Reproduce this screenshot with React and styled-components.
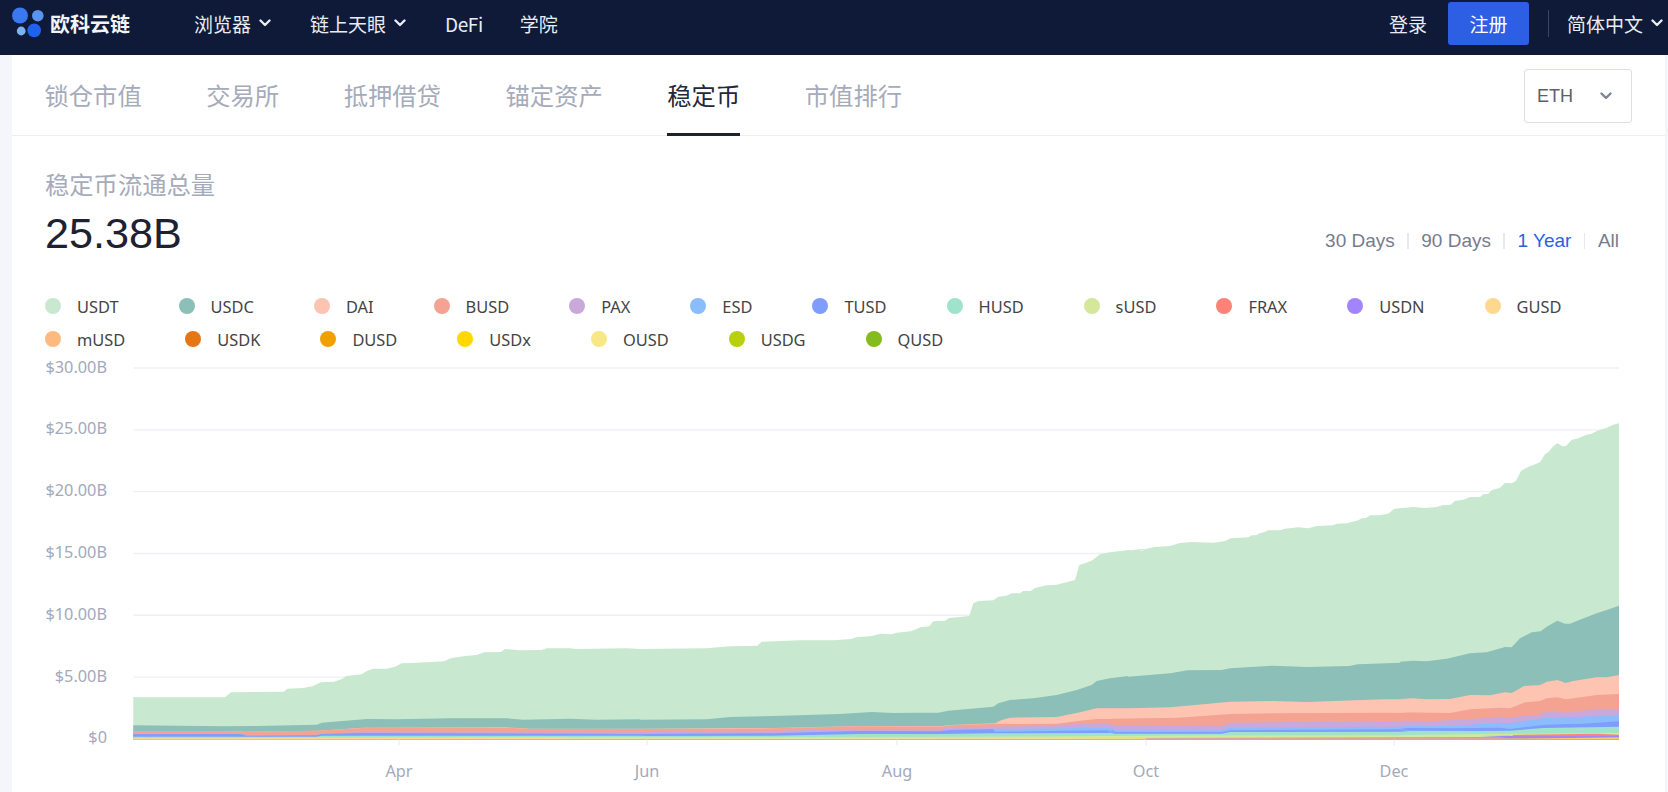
import React from "react";
import styled, { createGlobalStyle } from "styled-components";

const CJK = `"Noto Sans CJK SC", "Noto Sans", sans-serif`;
const LATIN = `"Liberation Sans", "Noto Sans CJK SC", sans-serif`;
const UI = `"Noto Sans", "Noto Sans CJK SC", sans-serif`;

const Global = createGlobalStyle`
  html, body { margin: 0; padding: 0; height: 792px; overflow: hidden; background: #f4f6fb; }
  #root { height: 792px; }
  * { box-sizing: border-box; }
`;

const Header = styled.header`
  display: flex;
  align-items: center;
  height: 55px;
  padding: 0 5px 9px 12px;
  background: #0e1a38;
  color: #fff;
  font-family: ${CJK};
  font-size: 19px;
`;
const Logo = styled.a`
  display: flex;
  align-items: center;
  gap: 4px;
  width: 182px;
  color: #f2f4f8;
  font-weight: 700;
  font-size: 20px;
`;
const LogoMark = styled.svg`
  width: 34px;
  height: 32px;
  flex: none;
`;
const Nav = styled.nav`
  display: flex;
  align-items: center;
  gap: 39px;
`;
const NavItem = styled.a`
  display: flex;
  align-items: center;
  gap: 8px;
  color: #e9ecf3;
  letter-spacing: ${(p) => (p.$latin ? "-0.4px" : "0")};
  margin-right: ${(p) => (p.$latin ? "-2px" : "0")};
`;
const Chev = styled.svg`
  width: 12px;
  height: 8px;
  flex: none;
  fill: none;
  stroke: ${(p) => p.$color || "#e9ecf3"};
  stroke-width: 2.4;
  stroke-linecap: round;
  stroke-linejoin: round;
`;
const HeaderRight = styled.div`
  display: flex;
  align-items: center;
  margin-left: auto;
`;
const Login = styled.a`
  color: #e9ecf3;
  margin-right: 21px;
`;
const SignUp = styled.button`
  width: 81px;
  height: 43px;
  border: 0;
  border-radius: 3px;
  background: #2c5fe3;
  color: #fff;
  font: inherit;
  padding: 0;
`;
const Divider = styled.span`
  width: 1px;
  height: 27px;
  margin: 0 18px 0 19px;
  background: #3a4560;
`;
const Lang = styled.a`
  display: flex;
  align-items: center;
  gap: 8px;
  color: #e9ecf3;
`;

const Panel = styled.main`
  margin: 0 3px 0 12px;
  height: 737px;
  background: #fff;
  overflow: hidden;
`;
const TabsBar = styled.div`
  display: flex;
  align-items: stretch;
  justify-content: space-between;
  height: 81px;
  padding: 0 33px 0 32.5px;
  border-bottom: 1.5px solid #eceef3;
`;
const Tabs = styled.div`
  display: flex;
  gap: 64.6px;
`;
const Tab = styled.a`
  display: flex;
  align-items: center;
  height: 81px;
  padding-top: 1px;
  font-family: ${CJK};
  font-size: 24.3px;
  color: ${(p) => (p.$active ? "#23273a" : "#a5abba")};
  border-bottom: 3px solid ${(p) => (p.$active ? "#1d2130" : "transparent")};
`;
const Select = styled.div`
  display: flex;
  align-items: center;
  justify-content: space-between;
  align-self: flex-start;
  width: 108px;
  height: 54px;
  margin-top: 14px;
  padding: 0 19px 0 12px;
  border: 1px solid #dcdfe9;
  border-radius: 3px;
  font-family: ${LATIN};
  font-size: 18px;
  color: #5a6072;
`;
const Body = styled.section`
  padding: 31.5px 46px 0 33px;
`;
const Summary = styled.div`
  display: flex;
  justify-content: space-between;
  align-items: flex-end;
`;
const SummaryTitle = styled.div`
  font-family: ${CJK};
  font-size: 24.3px;
  line-height: 32px;
  color: #a5abba;
`;
const SummaryValue = styled.div`
  margin-top: 8.5px;
  font-family: ${LATIN};
  font-size: 43.2px;
  line-height: 50px;
  color: #1d2130;
`;
const Range = styled.div`
  display: flex;
  align-items: center;
  gap: 12.5px;
  height: 26px;
  margin-bottom: 4px;
  font-family: ${LATIN};
  font-size: 19px;
`;
const RangeLink = styled.a`
  color: ${(p) => (p.$active ? "#2b5fe4" : "#767c8e")};
`;
const RangeSep = styled.span`
  width: 1.5px;
  height: 16px;
  background: #e6e9f0;
`;
const Legend = styled.ul`
  display: flex;
  flex-wrap: wrap;
  column-gap: 60px;
  height: 66.5px;
  margin: 31.5px 0 0;
  padding: 0;
  list-style: none;
`;
const LegendItem = styled.li`
  display: flex;
  align-items: center;
  gap: 16px;
  height: 33px;
  font-family: ${UI};
  font-size: 16.4px;
  color: #444;
`;
const Dot = styled.span`
  width: 16px;
  height: 16px;
  border-radius: 50%;
  background: ${(p) => p.$color};
`;
const Chart = styled.svg`
  display: block;
  width: 1574px;
  height: 436px;
  overflow: visible;
  font-family: ${UI};
  font-size: 16.3px;
`;

const crop = (ox, oy, pts, sx = 3) => pts.map(([x, y]) => [ox + x / sx, oy + y / 3]);
const Z10 = (p) => crop(130, 620, p);
const Z11 = (p) => crop(640, 530, p);
const Z12 = (p) => crop(1120, 415, p);
const Z4 = (p) => crop(1000, 620, p, 2.347);
const Z8 = (p) => crop(1400, 600, p);

const L = 133.5;
const R = 1619;
const BASE = 739.5;

const TOP = [
  ...Z10([[10,232],[285,232],[303,217],[462,215],[472,206],[520,204],[550,198],[572,187],[612,185],[635,177],[650,168],[695,163],[710,153],[730,146],[770,146],[795,140],[815,130],[860,128],[942,124],[962,115],[1005,108],[1040,105],[1062,97],[1112,96],[1125,87],[1170,91],[1235,90],[1250,85],[1320,85],[1340,87],[1490,85]]),
  ...Z11([[0,357],[200,355],[270,349],[352,347],[365,335],[480,331],[580,331],[635,327],[648,322],[695,318],[722,311],[755,313],[770,308],[812,304],[842,292],[868,289],[880,274],[915,272],[928,264],[988,258],[1000,220],[1015,213],[1060,211],[1075,200],[1100,197],[1115,190],[1140,190],[1150,183],[1172,183],[1185,174],[1220,166],[1250,164],[1285,155],[1305,150],[1318,105],[1335,100],[1355,92],[1380,73],[1410,67],[1465,60],[1500,63],[1515,56]]),
  ...Z12([[30,406],[65,408],[75,402],[105,396],[150,393],[180,384],[215,381],[280,383],[315,378],[332,370],[385,367],[395,361],[408,361],[420,354],[432,352],[445,346],[480,346],[495,341],[535,337],[565,340],[590,333],[640,331],[650,326],[680,325],[715,316],[725,310],[738,309],[750,301],[775,301],[805,296],[823,281],[880,276],[915,279],[950,276],[970,270],[992,269],[1005,258],[1030,254],[1050,246],[1080,246],[1090,238],[1105,236],[1115,226],[1140,218],[1155,204],[1175,205],[1188,197],[1203,168],[1220,158],[1245,148],[1260,142],[1275,118],[1285,112],[1300,94],[1312,85],[1328,94],[1338,93],[1355,75],[1375,70],[1400,59],[1415,56],[1430,48],[1460,38],[1480,29],[1497,25]]),
];

const USDC = [
  ...Z10([[10,316],[280,319],[380,318],[560,314],[575,308],[710,297],[800,298],[960,295],[1130,295],[1180,299],[1320,296],[1400,299],[1530,298]]),
  ...Z11([[0,569],[200,568],[270,561],[400,558],[600,552],[695,546],[760,549],[830,548],[895,548],[925,542],[1060,530],[1075,520],[1110,510],[1180,505],[1250,495],[1310,480],[1355,465],[1370,453],[1410,445],[1465,438]]),
  ...Z4([[300,170],[400,160],[440,151],[520,150],[540,145],[640,137],[720,141],[820,138],[840,133],[940,128]]),
  ...Z8([[0,185],[40,182],[80,184],[140,176],[210,160],[260,157],[315,141],[335,142],[360,115],[395,97],[422,94],[440,80],[472,62],[495,71],[510,71],[530,63],[590,40],[620,30],[657,17]]),
];

const DAI = [
  ...Z10([[10,333],[280,333],[350,335],[560,332],[700,323],[1130,322],[1200,326],[1560,326]]),
  ...Z11([[0,596],[400,594],[660,588],[900,589],[930,585],[1065,580],[1085,570],[1110,563],[1250,561],[1320,547],[1370,535],[1410,533]]),
  ...Z4([[230,265],[300,265],[400,262],[540,245],[640,243],[720,246],[900,238],[960,238]]),
  ...Z8([[0,297],[40,295],[80,298],[150,297],[210,285],[270,286],[315,277],[335,279],[372,258],[420,255],[440,245],[472,240],[497,249],[520,243],[590,232],[620,232],[657,225]]),
];

const BUSD = [
  ...Z10([[10,333],[280,333],[350,335],[560,332],[700,324],[1130,323],[1200,327],[1560,327]]),
  ...Z11([[0,597],[200,597],[400,595],[660,589],[900,590],[930,586],[1070,581],[1130,582],[1250,581],[1320,572],[1370,567],[1420,566],[1430,568]]),
  ...Z4([[260,296],[420,293],[540,282],[640,280],[900,278],[960,279]]),
  ...Z8([[0,337],[100,338],[150,339],[210,328],[300,323],[330,325],[375,307],[420,303],[440,295],[472,292],[497,298],[590,285],[657,282]]),
];

const PAX = [
  ...Z10([[10,342],[340,342],[360,345],[560,344],[570,341],[700,336],[1560,337]]),
  ...Z11([[0,603],[400,602],[660,597],[900,597],[930,592],[1160,588],[1320,582],[1400,580],[1420,585]]),
  ...Z4([[260,310],[270,316],[520,317],[540,308],[900,303],[960,304]]),
  ...Z8([[0,362],[100,363],[210,357],[300,352],[330,353],[375,347],[420,345],[430,337],[472,335],[497,338],[590,328],[657,328]]),
];

const ESD = [
  ...Z10([[10,343],[330,342],[350,347],[560,346],[575,342],[700,339],[1560,342]]),
  ...Z11([[0,612],[400,610],[660,603],[900,604],[930,600],[1060,598],[1400,593],[1420,600]]),
  ...Z4([[260,322],[270,331],[520,331],[540,323],[900,321],[960,322]]),
  ...Z8([[0,378],[150,378],[300,368],[330,370],[430,355],[497,352],[657,347]]),
];

const TUSD = [
  ...Z10([[10,343],[330,342],[350,347],[560,346],[575,342],[700,339],[1560,342]]),
  ...Z11([[0,612],[400,610],[660,603],[900,604],[930,600],[1060,598],[1065,605],[1400,601],[1420,607]]),
  ...Z4([[260,328],[270,336],[520,336],[540,331],[960,328]]),
  ...Z8([[0,384],[150,385],[300,383],[330,387],[430,375],[497,372],[540,372],[657,364]]),
];

const HUSD = [
  ...Z10([[10,350],[340,350],[560,350],[575,347],[1560,347]]),
  ...Z11([[0,618],[400,617],[660,612],[900,612],[1060,610],[1400,609]]),
  ...Z4([[260,338],[270,341],[520,341],[540,336],[960,335]]),
  ...Z8([[0,392],[250,393],[330,392],[430,384],[657,380]]),
];

const SUSD = [
  ...Z10([[10,354],[1560,351]]),
  ...Z11([[0,622],[1000,620],[1400,618]]),
  ...Z4([[520,346],[960,346]]),
  ...Z8([[0,405],[657,398]]),
];

const FRAX = Z8([[330,414],[340,405],[590,401],[657,404]]);
const USDN = [
  ...Z4([[342,354],[1190,352]]),
  ...Z8([[240,408],[330,407],[340,409],[657,407]]),
];
const GUSD = [[L, 738.2], [561, 737.8], [566, 738.8], [1146, 738.4], [1500, 738.6], [R, 737.6]];
const DUSD = [[L, 739.2], [1050, 738.9], [R, 738.8]];

const SERIES = [
  { name: "USDT", color: "#c8e9cf", top: TOP },
  { name: "USDC", color: "#8bbfb7", top: USDC },
  { name: "DAI", color: "#fec4b2", top: DAI },
  { name: "BUSD", color: "#f4a392", top: BUSD },
  { name: "PAX", color: "#c9a9dc", top: PAX },
  { name: "ESD", color: "#8abcfe", top: ESD },
  { name: "TUSD", color: "#7f9cff", top: TUSD },
  { name: "HUSD", color: "#9fe3cb", top: HUSD },
  { name: "sUSD", color: "#d5e79a", top: SUSD },
  { name: "FRAX", color: "#ff8278", top: FRAX },
  { name: "USDN", color: "#a285fe", top: USDN },
  { name: "GUSD", color: "#fed88f", top: GUSD },
  { name: "mUSD", color: "#fdb97e" },
  { name: "USDK", color: "#e47616" },
  { name: "DUSD", color: "#f0a000", top: DUSD },
  { name: "USDx", color: "#ffd800" },
  { name: "OUSD", color: "#f7e785" },
  { name: "USDG", color: "#b9d00f" },
  { name: "QUSD", color: "#84bc1e" },
];

const areaPoints = (top) => {
  const pts = top.map(([x, y]) => `${x.toFixed(1)},${y.toFixed(1)}`).join(" ");
  return `${pts} ${top[top.length - 1][0].toFixed(1)},${BASE} ${top[0][0].toFixed(1)},${BASE}`;
};

const Y_LABELS = ["$30.00B", "$25.00B", "$20.00B", "$15.00B", "$10.00B", "$5.00B", "$0"];
const MONTHS = [["Apr", 399], ["Jun", 647], ["Aug", 897], ["Oct", 1146], ["Dec", 1394]];
const TABS = ["锁仓市值", "交易所", "抵押借贷", "锚定资产", "稳定币", "市值排行"];

function Chevron({ color }) {
  return (
    <Chev viewBox="0 0 12 8" $color={color}>
      <polyline points="1.5,1.5 6,6 10.5,1.5" />
    </Chev>
  );
}

export default function App() {
  return (
    <>
      <Global />
      <Header>
        <Logo>
          <LogoMark viewBox="12 7 34 32">
            <circle cx="20" cy="15.5" r="8" fill="#3a78f2" />
            <circle cx="37.8" cy="15.7" r="5.8" fill="#5b94f0" />
            <circle cx="21.2" cy="31" r="4.4" fill="#7ab3f0" />
            <circle cx="34.2" cy="30.4" r="6.8" fill="#1f62ef" />
          </LogoMark>
          欧科云链
        </Logo>
        <Nav>
          <NavItem>浏览器<Chevron /></NavItem>
          <NavItem>链上天眼<Chevron /></NavItem>
          <NavItem $latin>DeFi</NavItem>
          <NavItem>学院</NavItem>
        </Nav>
        <HeaderRight>
          <Login>登录</Login>
          <SignUp>注册</SignUp>
          <Divider />
          <Lang>简体中文<Chevron /></Lang>
        </HeaderRight>
      </Header>
      <Panel>
        <TabsBar>
          <Tabs>
            {TABS.map((t) => (
              <Tab key={t} $active={t === "稳定币"}>{t}</Tab>
            ))}
          </Tabs>
          <Select>ETH<Chevron color="#7f8597" /></Select>
        </TabsBar>
        <Body>
          <Summary>
            <div>
              <SummaryTitle>稳定币流通总量</SummaryTitle>
              <SummaryValue>25.38B</SummaryValue>
            </div>
            <Range>
              <RangeLink>30 Days</RangeLink>
              <RangeSep />
              <RangeLink>90 Days</RangeLink>
              <RangeSep />
              <RangeLink $active>1 Year</RangeLink>
              <RangeSep />
              <RangeLink>All</RangeLink>
            </Range>
          </Summary>
          <Legend>
            {SERIES.map((s) => (
              <LegendItem key={s.name}>
                <Dot $color={s.color} />
                {s.name}
              </LegendItem>
            ))}
          </Legend>
          <Chart viewBox="45 356 1574 436">
            {Y_LABELS.map((label, i) => {
              const y = 368 + i * 61.83;
              return (
                <g key={label}>
                  {i < 6 && <line x1={L} x2={R} y1={y} y2={y} stroke="#eef0f5" strokeWidth="1.4" />}
                  <text x="107" y={y + 4.5} textAnchor="end" fill="#a3a9ba">{label}</text>
                </g>
              );
            })}
            {SERIES.filter((s) => s.top).map((s) => (
              <polygon key={s.name} points={areaPoints(s.top)} fill={s.color} />
            ))}
            {MONTHS.map(([m, x]) => (
              <g key={m}>
                <line x1={x} x2={x} y1={BASE} y2="745.5" stroke="#e5e7ee" strokeWidth="1" />
                <text x={x} y="776.5" textAnchor="middle" fill="#a3a9ba">{m}</text>
              </g>
            ))}
          </Chart>
        </Body>
      </Panel>
    </>
  );
}
